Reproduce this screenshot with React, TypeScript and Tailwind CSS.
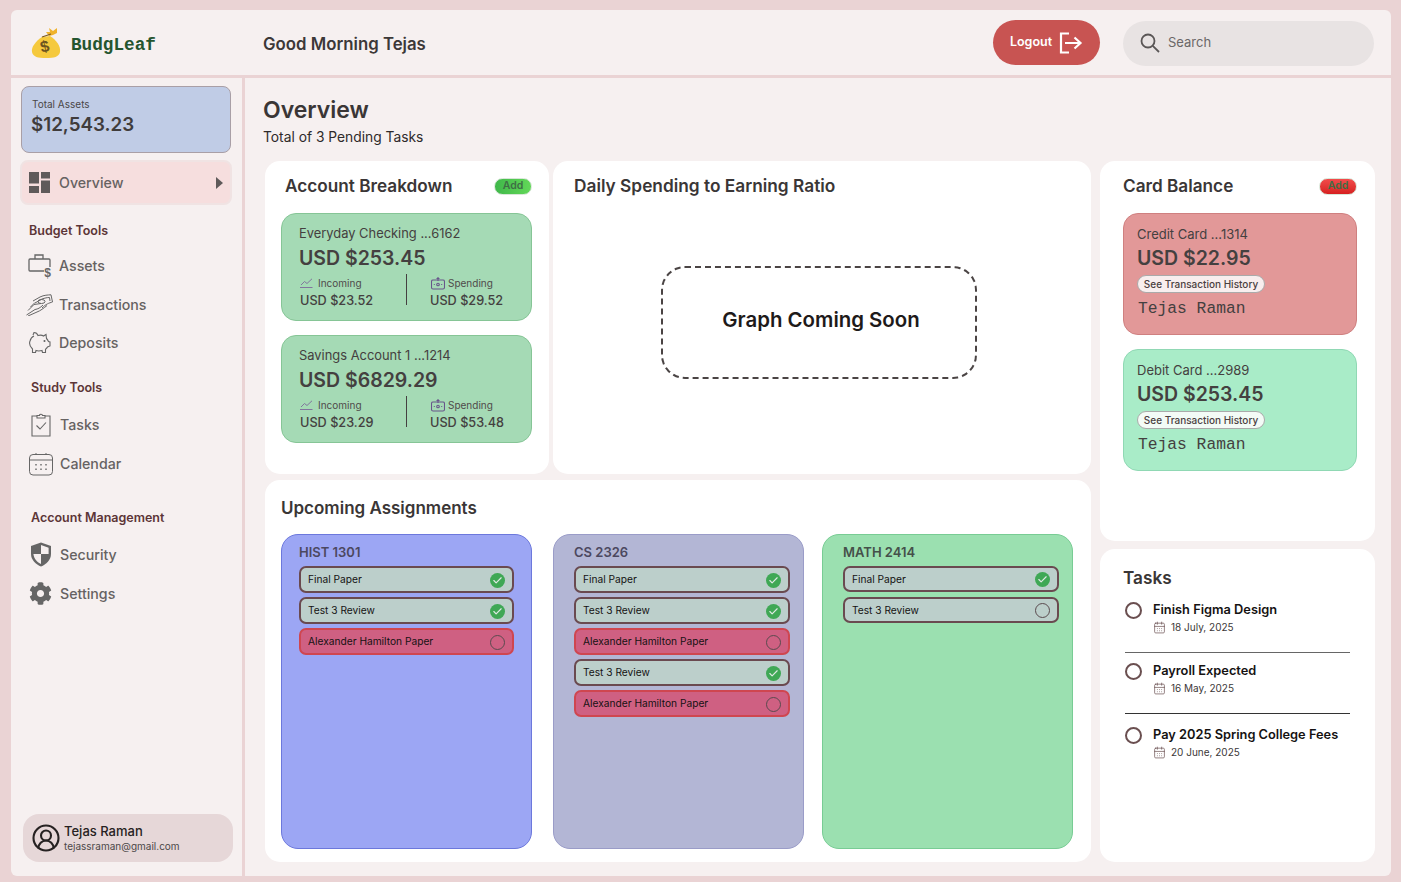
import React from "react";
import { Check, CircleUserRound, CalendarDays } from "lucide-react";
import { FaCog } from "react-icons/fa";

const SANS = "font-['Inter','Noto_Sans',sans-serif]";
const MONO = "font-['Liberation_Mono','DejaVu_Sans_Mono',monospace]";

function MoneyBag() {
  return (
    <svg width="30" height="32" viewBox="0 0 30 32">
      <path d="M11 10 C5 14 0 20 1 25 C2 30 7 31 15 31 C23 31 28 30 29 25 C30 19 25 13 19 9 Z" fill="#f5c93d" />
      <path d="M18 9 L15 5 L19 5 L18 1 L22 4 L26 1 L26 6 L22 8 Z" fill="#efb22c" />
      <path d="M11 10 L20 7" stroke="#7a5a20" strokeWidth="1.3" />
      <text x="14" y="25" fontSize="16" fontWeight="700" textAnchor="middle" fill="#6b5320" fontFamily="Liberation Sans" transform="rotate(-12 14 21)">$</text>
    </svg>
  );
}

function SearchIcon() {
  return (
    <svg width="20" height="20" viewBox="0 0 20 20" fill="none" stroke="#5a5656" strokeWidth="1.8">
      <circle cx="8" cy="8" r="6.5" />
      <path d="M12.8 12.8 L19 19" />
    </svg>
  );
}

function LogoutIcon() {
  return (
    <svg width="24" height="22" viewBox="0 0 24 22" fill="none" stroke="#fff" strokeWidth="2.2">
      <path d="M10 1.5 H2 V20.5 H10" />
      <path d="M6 11 H21 M15.5 5.5 L21.5 11 L15.5 16.5" />
    </svg>
  );
}

function AssetsIcon() {
  return (
    <svg width="26" height="28" viewBox="0 0 26 28" fill="none" stroke="#666" strokeWidth="1.3">
      <path d="M17 19 H3 a1 1 0 0 1 -1 -1 V8 a1 1 0 0 1 1 -1 H22 a1 1 0 0 1 1 1 V15" />
      <path d="M8 7 V3 H16 V7" />
      <text x="20.5" y="25" fontSize="12" fontWeight="700" textAnchor="middle" fill="#666" stroke="none" fontFamily="Liberation Sans">$</text>
    </svg>
  );
}

function TransactionsIcon() {
  return (
    <svg width="27" height="22" viewBox="0 0 27 22" fill="none" stroke="#666" strokeWidth="1">
      <path d="M7 7 L14 3 C18 1 22 1 25 0.8 L26.5 8 C23 9 20 10 16 14" />
      <path d="M9 9 L16 5 C19 4 21 3.5 23.5 3.5 L24 7" />
      <ellipse cx="15.5" cy="7.5" rx="3.5" ry="2" />
      <path d="M0.5 21 L9 15.5 C12 15 14 14 17 11 M2 16.5 L8 10.5 L15 9.5 M2 22 L11 18 C14 17 18 14 21 11.5 M4.5 13 L9 8.5" />
    </svg>
  );
}

function PiggyIcon() {
  return (
    <svg width="23" height="23" viewBox="0 0 23 23" fill="none" stroke="#666" strokeWidth="1.1">
      <path d="M5 4 L6 1.5 C8 1.5 9.5 3 10 4.5 C12 4 14 4 15.5 5 L18 3.5 L18.5 7.5 C19.5 8.5 20 9.5 20.5 10.5 L22 11 L22 15 L19.5 16 C19 17 18 17.5 17.5 18.5 L17.5 21.5 L14.5 21.5 L14 19.5 C12 20 9.5 20 8 19.5 L7.5 21.5 L4.5 21.5 L4.5 18 C2 15.5 1 12.5 2 10 C2.5 8 3.5 6 6 5" />
      <circle cx="16.5" cy="10" r=".5" fill="#666" />
    </svg>
  );
}

function ClipboardIcon() {
  return (
    <svg width="20" height="24" viewBox="0 0 20 24" fill="none" stroke="#666" strokeWidth="1.1">
      <path d="M6 3 H1 V23 H19 V3 H14" />
      <path d="M6 5 V2.5 H8.5 C8.5 .8 11.5 .8 11.5 2.5 H14 V5 Z" />
      <path d="M5.5 12.5 L9 16 L15 9.5" />
    </svg>
  );
}

function CalendarIcon() {
  return (
    <svg width="24" height="24" viewBox="0 0 24 24" fill="none" stroke="#666" strokeWidth="1">
      <rect x=".5" y="2.5" width="23" height="20.5" rx="3.5" />
      <path d="M.5 8 H23.5 M7 1 V3 M17 1 V3" />
      <path d="M7 12 V13.5 M12 12 V13.5 M17 12 V13.5 M7 16.5 V18 M12 16.5 V18 M17 16.5 V18" strokeWidth="1.4" />
    </svg>
  );
}

function ShieldIcon() {
  return (
    <svg width="22" height="25" viewBox="0 0 22 25">
      <path d="M11 .5 L21 4 V12 C21 18 16 22.5 11 24.5 C6 22.5 1 18 1 12 V4 Z" fill="#666" />
      <path d="M11 3 V12 H18.6 V5.7 Z M11 12 H3.4 C4 17 7.5 20.4 11 22 Z" fill="#f6f0f0" />
    </svg>
  );
}

function OverviewIcon() {
  return (
    <svg width="21" height="21" viewBox="0 0 21 21" fill="#5f5a5a">
      <rect x="0" y="0" width="10" height="11.5" />
      <rect x="12" y="0" width="9" height="6.5" />
      <rect x="12" y="8.5" width="9" height="12.5" />
      <rect x="0" y="14" width="10" height="7" />
    </svg>
  );
}

function TrendIcon() {
  return (
    <svg width="13" height="10" viewBox="0 0 13 10" fill="none" stroke="#7d6a9a" strokeWidth="0.9">
      <path d="M0 9.5 H12.5" />
      <path d="M1 7 L4.5 3.5 L7 5.5 L12 .8" />
    </svg>
  );
}

function SpendIcon() {
  return (
    <svg width="14" height="13" viewBox="0 0 14 13" fill="none" stroke="#68558a" strokeWidth="1.1">
      <rect x=".5" y="3" width="13" height="9" rx="1.5" />
      <path d="M7 0 V4 M5.5 1.5 H8.5" />
      <circle cx="7" cy="7.5" r="1.3" />
      <path d="M2.8 7.5 H3.8 M10.2 7.5 H11.2" />
    </svg>
  );
}

function SideLink({ icon, label, className }: { icon: React.ReactNode; label: string; className: string }) {
  return (
    <div className={`flex h-[39px] items-center text-[14.2px] font-medium text-[#666262] ${className}`}>
      <div className="flex w-[31px] shrink-0 justify-center">{icon}</div>
      <span className="ml-[4px]">{label}</span>
    </div>
  );
}

function SideHeading({ label, className }: { label: string; className: string }) {
  return <div className={`text-[12.5px] leading-[18px] font-semibold text-[#5c3537] ${className}`}>{label}</div>;
}

function Sidebar() {
  return (
    <aside className="flex w-[231px] shrink-0 flex-col pt-[8px]">
      <div className="mr-[11px] ml-[10px] h-[67px] rounded-[8px] border border-[#a99fa6] bg-[#c0cce6] pt-[10px] pl-[9px]">
        <div className="pl-[1px] text-[10px] leading-[14px] text-[#4a4646]">Total Assets</div>
        <div className="text-[18.8px] leading-[28px] font-semibold text-[#403c3c]">$12,543.23</div>
      </div>
      <div className="mt-[7px] mr-[10px] ml-[9px] flex h-[45px] items-center rounded-[8px] border-2 border-[#f0e3e3] bg-[#f6dede] pr-[7px] pl-[7px] text-[14.2px] font-medium text-[#666262]">
        <OverviewIcon />
        <span className="ml-[9px] flex-1">Overview</span>
        <div className="h-0 w-0 border-y-[6px] border-l-[7px] border-y-transparent border-l-[#5f5a5a]" />
      </div>
      <SideHeading label="Budget Tools" className="mt-[17px] ml-[18px]" />
      <SideLink className="mt-[6px] ml-[13px]" icon={<AssetsIcon />} label="Assets" />
      <SideLink className="ml-[13px]" icon={<TransactionsIcon />} label="Transactions" />
      <SideLink className="-mt-[1px] ml-[13px]" icon={<PiggyIcon />} label="Deposits" />
      <SideHeading label="Study Tools" className="mt-[17px] ml-[20px]" />
      <SideLink className="mt-[8px] ml-[14px]" icon={<ClipboardIcon />} label="Tasks" />
      <SideLink className="ml-[14px]" icon={<CalendarIcon />} label="Calendar" />
      <SideHeading label="Account Management" className="mt-[26px] ml-[20px]" />
      <SideLink className="mt-[8px] ml-[14px]" icon={<ShieldIcon />} label="Security" />
      <SideLink className="ml-[14px]" icon={<FaCog size={23} color="#666" />} label="Settings" />
      <div className="mt-auto mr-[9px] mb-[14px] ml-[12px] flex h-[48px] items-center rounded-[16px] bg-[#e6d7d8] pl-[8px]">
        <CircleUserRound size={30} strokeWidth={1.7} color="#262222" />
        <div className="ml-[3px]">
          <div className="text-[13px] leading-[16px] font-medium text-[#262222]">Tejas Raman</div>
          <div className="text-[10px] leading-[14px] text-[#4c4848]">tejassraman@gmail.com</div>
        </div>
      </div>
    </aside>
  );
}

function AddPill({ red }: { red?: boolean }) {
  return (
    <div
      className={`flex h-[17px] w-[38px] items-center justify-center rounded-full border border-[#d8e6d8] text-[10.5px] font-semibold text-[#3e6f45] ${
        red ? "bg-gradient-to-b from-[#f24b4b] to-[#d61f1f]" : "bg-gradient-to-r from-[#3fb84a] to-[#62d858]"
      }`}
    >
      Add
    </div>
  );
}

const ACCOUNTS = [
  { name: "Everyday Checking ...6162", total: "USD $253.45", incoming: "USD $23.52", spending: "USD $29.52" },
  { name: "Savings Account 1 ...1214", total: "USD $6829.29", incoming: "USD $23.29", spending: "USD $53.48" },
];

function AccountCard({ name, total, incoming, spending }: (typeof ACCOUNTS)[number]) {
  return (
    <div className="h-[108px] rounded-[15px] border border-[#86c596] bg-[#a5dab5] pt-[11px] pl-[17px] text-[#444040]">
      <div className="text-[12.9px] leading-[18px]">{name}</div>
      <div className="pt-[1px] text-[19.5px] leading-[28px] font-semibold">{total}</div>
      <div className="mt-[3px] flex">
        <div className="w-[107px] pl-[1px]">
          <div className="flex h-[16px] items-center gap-[5px] text-[10px] text-[#4f4b4b]">
            <TrendIcon />
            Incoming
          </div>
          <div className="mt-[1px] text-[12.7px] leading-[18px] font-medium">{incoming}</div>
        </div>
        <div className="-mt-[1px] h-[31px] w-px bg-[#444040]" />
        <div className="ml-[23px]">
          <div className="flex h-[16px] items-center gap-[3px] pl-[1px] text-[10px] text-[#4f4b4b]">
            <SpendIcon />
            Spending
          </div>
          <div className="mt-[1px] text-[12.7px] leading-[18px] font-medium">{spending}</div>
        </div>
      </div>
    </div>
  );
}

function AccountBreakdown() {
  return (
    <section className="h-[313px] w-[284px] shrink-0 rounded-[15px] bg-white pt-[13px] pr-[17px] pl-[16px]">
      <div className="flex h-[24px] items-center justify-between pl-[4px]">
        <h2 className="text-[17.2px] font-semibold text-[#3a3636]">Account Breakdown</h2>
        <AddPill />
      </div>
      <div className="mt-[15px] flex flex-col gap-[14px]">
        {ACCOUNTS.map((a) => (
          <AccountCard key={a.name} {...a} />
        ))}
      </div>
    </section>
  );
}

function SpendingRatio() {
  return (
    <section className="flex h-[313px] flex-1 flex-col rounded-[15px] bg-white pt-[13px] pl-[21px]">
      <h2 className="h-[24px] text-[17.3px] leading-[24px] font-semibold text-[#3a3636]">Daily Spending to Earning Ratio</h2>
      <div className="mt-[68px] ml-[87px] flex h-[113px] w-[316px] items-center justify-center rounded-[24px] border-2 border-dashed border-[#4a4444] pb-[5px] pl-[4px] text-[20.4px] font-semibold text-[#1e1a1a]">
        Graph Coming Soon
      </div>
    </section>
  );
}

type Item = { label: string; done: boolean };

const COURSES: { name: string; box: string; title: string; list: string; row: string; items: Item[] }[] = [
  {
    name: "HIST 1301",
    box: "pl-[17px] pr-[17px] bg-[#9ca6f4] border-[#6c78dc]",
    title: "text-[#4c4860]",
    list: "gap-[4px]",
    row: "h-[27px]",
    items: [
      { label: "Final Paper", done: true },
      { label: "Test 3 Review", done: true },
      { label: "Alexander Hamilton Paper", done: false },
    ],
  },
  {
    name: "CS 2326",
    box: "ml-[21px] pl-[20px] pr-[13px] bg-[#b3b6d5] border-[#9a9cc8]",
    title: "text-[#4c4860]",
    list: "gap-[4px]",
    row: "h-[27px]",
    items: [
      { label: "Final Paper", done: true },
      { label: "Test 3 Review", done: true },
      { label: "Alexander Hamilton Paper", done: false },
      { label: "Test 3 Review", done: true },
      { label: "Alexander Hamilton Paper", done: false },
    ],
  },
  {
    name: "MATH 2414",
    box: "ml-[18px] pl-[20px] pr-[13px] bg-[#9be0b0] border-[#78cc94]",
    title: "text-[#45504a]",
    list: "gap-[5px]",
    row: "h-[26px]",
    items: [
      { label: "Final Paper", done: true },
      { label: "Test 3 Review", done: false },
    ],
  },
];

function AssignmentRow({ label, done, red, height }: { label: string; done: boolean; red: boolean; height: string }) {
  return (
    <div
      className={`flex items-center justify-between rounded-[7px] border-2 pt-[1px] pr-[7px] pl-[7px] text-[10.2px] text-[#151212] ${height} ${
        red ? "border-[#cf4650] bg-[#cf6082]" : "border-[#6a4a50] bg-[#bccfcb]"
      }`}
    >
      {label}
      {done ? (
        <div className="flex h-[15px] w-[15px] items-center justify-center rounded-full bg-[#3fa855]">
          <Check size={11} strokeWidth={2.5} color="#dfe9e4" />
        </div>
      ) : (
        <div className="h-[15px] w-[15px] rounded-full border-[1.5px] border-[#5a4a4e]" />
      )}
    </div>
  );
}

function UpcomingAssignments() {
  return (
    <section className="h-[382px] rounded-[15px] bg-white pt-[16px] pl-[16px]">
      <h2 className="h-[24px] text-[17px] leading-[24px] font-semibold text-[#3a3636]">Upcoming Assignments</h2>
      <div className="mt-[14px] flex">
        {COURSES.map((c) => (
          <div key={c.name} className={`h-[315px] w-[251px] rounded-[17px] border pt-[8px] ${c.box}`}>
            <div className={`text-[13px] leading-[18px] font-semibold ${c.title}`}>{c.name}</div>
            <div className={`mt-[5px] flex flex-col ${c.list}`}>
              {c.items.map((item, i) => (
                <AssignmentRow key={i} label={item.label} done={item.done} red={item.label.startsWith("Alexander")} height={c.row} />
              ))}
            </div>
          </div>
        ))}
      </div>
    </section>
  );
}

const CARDS = [
  { name: "Credit Card ...1314", total: "USD $22.95", bg: "bg-[#e29898] border-[#cf8080]", pill: "bg-[#f8eeee]" },
  { name: "Debit Card ...2989", total: "USD $253.45", bg: "bg-[#a9ecc8] border-[#90d8b4]", pill: "bg-[#f3fbf6]" },
];

function CardBalance() {
  return (
    <section className="h-[380px] rounded-[15px] bg-white pt-[13px] pr-[18px] pl-[23px]">
      <div className="flex h-[24px] items-center justify-between">
        <h2 className="text-[17.2px] font-semibold text-[#3a3636]">Card Balance</h2>
        <AddPill red />
      </div>
      <div className="mt-[15px] flex flex-col gap-[14px]">
        {CARDS.map((c) => (
          <div key={c.name} className={`h-[122px] rounded-[15px] border pt-[11px] pl-[13px] text-[#444040] ${c.bg}`}>
            <div className="text-[13px] leading-[18px]">{c.name}</div>
            <div className="pt-[1px] text-[19.5px] leading-[28px] font-semibold">{c.total}</div>
            <div className={`mt-[3px] flex h-[18px] w-[128px] items-center justify-center rounded-full border border-[#aaa] text-[10px] font-medium text-[#4a4040] ${c.pill}`}>
              See Transaction History
            </div>
            <div className={`mt-[4px] ml-[1px] text-[16.3px] leading-[24px] ${MONO}`}>Tejas Raman</div>
          </div>
        ))}
      </div>
    </section>
  );
}

const TASKS = [
  { title: "Finish Figma Design", date: "18 July, 2025", box: "pt-[8px] pb-[18px]" },
  { title: "Payroll Expected", date: "16 May, 2025", box: "pt-[9px] pb-[18px] border-t border-[#666]" },
  { title: "Pay 2025 Spring College Fees", date: "20 June, 2025", box: "pt-[12px] border-t border-[#333]" },
];

function TaskList() {
  return (
    <section className="h-[313px] rounded-[15px] bg-white pt-[17px] pr-[25px] pl-[25px]">
      <h2 className="-ml-[2px] h-[24px] text-[17.2px] leading-[24px] font-semibold text-[#3a3636]">Tasks</h2>
      <div className="mt-[3px]">
        {TASKS.map((t) => (
          <div key={t.title} className={t.box}>
            <div className="flex">
              <div className="mt-[1px] h-[17px] w-[17px] rounded-full border-2 border-[#6a4f50]" />
              <div className="ml-[11px]">
                <div className="text-[12.8px] leading-[18px] font-semibold text-[#151212]">{t.title}</div>
                <div className="mt-[1px] flex items-center gap-[5px] text-[10px] leading-[14px] text-[#3c3838]">
                  <CalendarDays size={13} strokeWidth={1.3} color="#6a4f50" />
                  {t.date}
                </div>
              </div>
            </div>
          </div>
        ))}
      </div>
    </section>
  );
}

export default function App() {
  return (
    <div className={`h-[882px] w-[1401px] overflow-hidden bg-[#ead3d4] pt-[10px] pr-[10px] pb-[6px] pl-[11px] ${SANS}`}>
      <div className="flex h-full flex-col overflow-hidden rounded-[6px] bg-[#f6f0f0]">
        <header className="flex h-[65px] shrink-0 items-center">
          <div className="ml-[20px] flex w-[232px] items-center gap-[10px]">
            <MoneyBag />
            <span className={`pt-[5px] text-[17.7px] font-bold text-[#24552f] ${MONO}`}>BudgLeaf</span>
          </div>
          <div className="pt-[4px] text-[16.8px] font-semibold text-[#3c3838]">Good Morning Tejas</div>
          <div className="ml-auto flex h-[45px] w-[107px] items-center justify-center gap-[7px] rounded-full bg-[#c85452] text-[12.5px] font-semibold text-white">
            Logout
            <LogoutIcon />
          </div>
          <div className="mt-[1px] mr-[17px] ml-[23px] flex h-[45px] w-[251px] items-center rounded-full bg-[#e8e3e3] pl-[17px] text-[13px] text-[#6b6767]">
            <SearchIcon />
            <span className="ml-[8px]">Search</span>
          </div>
        </header>
        <div className="flex min-h-0 flex-1 border-t-[3px] border-[#ead3d4]">
          <Sidebar />
          <main className="flex-1 border-l-[3px] border-[#ead3d4] pt-[17px] pl-[20px]">
            <h1 className="-ml-[2px] text-[23px] leading-[30px] font-semibold text-[#3a3636]">Overview</h1>
            <div className="mt-[2px] -ml-[2px] text-[13.8px] leading-[20px] text-[#2e2a2a]">Total of 3 Pending Tasks</div>
            <div className="mt-[14px] flex gap-[9px]">
              <div className="flex w-[826px] shrink-0 flex-col gap-[6px]">
                <div className="flex gap-[4px]">
                  <AccountBreakdown />
                  <SpendingRatio />
                </div>
                <UpcomingAssignments />
              </div>
              <div className="flex w-[275px] shrink-0 flex-col gap-[8px]">
                <CardBalance />
                <TaskList />
              </div>
            </div>
          </main>
        </div>
      </div>
    </div>
  );
}
